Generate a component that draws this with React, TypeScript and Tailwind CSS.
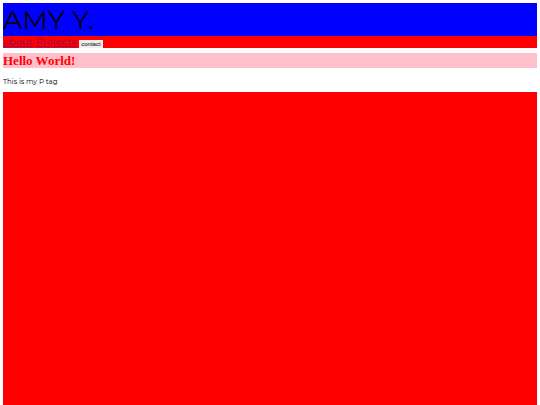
export default function App() {
    return (
        <div className="flex min-h-screen flex-col bg-white px-[3px] pt-[3px] font-['Montserrat','Inter',sans-serif] text-black">
            <header className="bg-[#0000ff]">
                <h1 className="text-[27px] leading-[33px] font-normal">AMY Y.</h1>
            </header>
            <nav className="flex h-3 items-end gap-[3px] bg-[#ff0000] text-[10px] leading-3 text-[#850c5c]">
                <a href="#about" className="underline underline-offset-1">about</a>
                <a href="#projects" className="underline underline-offset-1">Projects</a>
                <button type="button" className="h-2 bg-[#efefef] px-[2px] font-['Liberation_Sans',sans-serif] text-[6px] leading-2 text-black">
                    contact
                </button>
            </nav>
            <main className="flex flex-1 flex-col pt-[5px]">
                <h2 className="bg-[#ffc0cb] font-['Liberation_Serif',serif] text-[13px] leading-[15px] font-bold text-[#ff0000]">
                    Hello World!
                </h2>
                <p className="pt-[10px] pb-[6px] text-[7px] leading-2">This is my P tag</p>
                <section className="flex-1 bg-[#ff0000]" />
            </main>
        </div>
    );
}
